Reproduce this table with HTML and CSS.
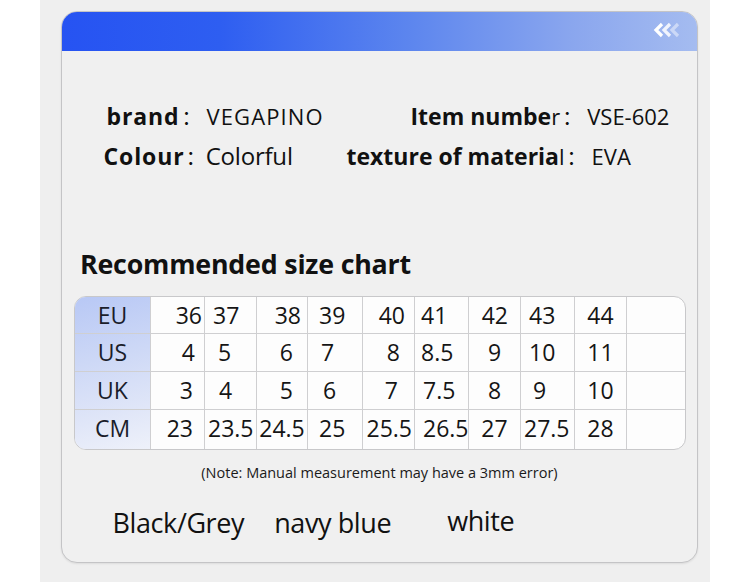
FILE: index.html
```html
<!DOCTYPE html>
<html>
<head>
<meta charset="utf-8">
<link rel="stylesheet" href="styles.css">
</head>
<body>
<div class="page">
  <div class="card">
    <div class="bar">
      <svg class="chev" width="30" height="16" viewBox="0 0 30 16">
        <path d="M9 2 L3 8 L9 14" fill="none" stroke="#ffffff" stroke-width="3.2"/>
        <path d="M17 2 L11 8 L17 14" fill="none" stroke="#ffffff" stroke-opacity="0.85" stroke-width="3.2"/>
        <path d="M25 2 L19 8 L25 14" fill="none" stroke="#ffffff" stroke-opacity="0.45" stroke-width="3.2"/>
      </svg>
    </div>

    <div class="info">
      <div class="info-row">
        <div class="item w1"><b class="wide">brand</b><span class="colon">：</span><span class="v vega">VEGAPINO</span></div>
        <div class="item"><b>Item numbe</b>r<span class="colon">：</span><span class="v">VSE-602</span></div>
      </div>
      <div class="info-row">
        <div class="item w2"><b class="wide">Colour</b><span class="colon tight">：</span><span class="v big">Colorful</span></div>
        <div class="item"><b>texture of materia</b>l<span class="colon">：</span><span class="v">EVA</span></div>
      </div>
    </div>

    <h2 class="title">Recommended size chart</h2>

    <div class="chart">
      <div class="heads">
        <div class="hd">EU</div>
        <div class="hd">US</div>
        <div class="hd">UK</div>
        <div class="hd last">CM</div>
      </div>
      <div class="grid">
        <div class="c r2">36</div><div class="c l8">37</div><div class="c r6">38</div><div class="c l11">39</div><div class="c r9">40</div><div class="c l6">41</div><div class="c r12">42</div><div class="c l8">43</div><div class="c m">44</div><div class="c e"></div>

        <div class="c r9">4</div><div class="c l13">5</div><div class="c r14">6</div><div class="c l13">7</div><div class="c r14">8</div><div class="c l6">8.5</div><div class="c m">9</div><div class="c l8">10</div><div class="c m">11</div><div class="c e"></div>

        <div class="c r11">3</div><div class="c l14">4</div><div class="c r14">5</div><div class="c l15">6</div><div class="c r16">7</div><div class="c l8">7.5</div><div class="c m">8</div><div class="c l12">9</div><div class="c m">10</div><div class="c e"></div>

        <div class="c last r11">23</div><div class="c last l3">23.5</div><div class="c last m">24.5</div><div class="c last l11">25</div><div class="c last r2">25.5</div><div class="c last l8">26.5</div><div class="c last m">27</div><div class="c last l3">27.5</div><div class="c last m">28</div><div class="c last e"></div>
      </div>
    </div>

    <p class="note">(Note: Manual measurement may have a 3mm error)</p>

    <div class="colors">
      <span class="col k1">Black/Grey</span>
      <span class="col k2">navy blue</span>
      <span class="col k3">white</span>
    </div>
  </div>
</div>
</body>
</html>
```

FILE: styles.css
```css
* { box-sizing: border-box; }
html, body { margin: 0; padding: 0; background: #ffffff; }
body {
  font-family: "Open Sans", "Noto Sans", "Noto Sans CJK SC", sans-serif;
  color: #111;
}
.page {
  margin-left: 40px;
  width: 670px;
  height: 582px;
  background: #efefef;
  padding: 11px 12px 0 21px;
}
.card {
  width: 637px;
  height: 552px;
  border: 1.5px solid #c4c4c6;
  border-radius: 16px;
  background: #f0f0f0;
  overflow: hidden;
  box-shadow: 0 1px 2px rgba(0,0,0,0.08);
}
.bar {
  height: 40px;
  background: linear-gradient(90deg, #2653f2 0%, #2e5ef1 25%, #5d86ee 55%, #8aa6ee 80%, #a5bcf0 100%);
  display: flex;
  justify-content: flex-end;
  align-items: center;
  padding-right: 16px;
  margin: -1.5px -1.5px 0 -1.5px;
}
.chev { display: block; margin-top: -2px; }

.info { padding-top: 49px; height: 195px; }
.info-row { display: flex; align-items: baseline; height: 39px; }
.item { font-size: 22px; white-space: nowrap; }
.item b { font-weight: 700; font-size: 23px; }
.item b.wide { letter-spacing: 0.9px; }
.colon { font-family: "Noto Sans CJK SC", sans-serif; font-size: 20px; margin: 0 5px 0 2px; }
.colon.tight { margin: 0 0 0 1px; }
.v { font-size: 22px; }
.v.vega { letter-spacing: 1.1px; }
.v.big { font-size: 24px; letter-spacing: -0.2px; }
.w1 { margin-left: 44.5px; width: 304px; }
.w2 { margin-left: 41.5px; width: 243px; }

.title {
  margin: 0 0 14px 18px;
  font-size: 26.8px;
  font-weight: 700;
  line-height: 36px;
  letter-spacing: -0.2px;
}

.chart {
  margin-left: 12px;
  width: 612px;
  display: flex;
  border: 1.5px solid #c8c8ca;
  border-radius: 12px;
  overflow: hidden;
  background: #fdfdfd;
}
.heads {
  width: 76px;
  flex: none;
  display: grid;
  grid-template-rows: 37px 38px 38px 39px;
  background: linear-gradient(165deg, #b8c8f5 0%, #cdd8f6 40%, #e0e6f8 75%, #eef1fa 100%);
}
.grid {
  flex: 1;
  display: grid;
  grid-template-columns: 54px 52px 51px 55px 52px 54px 52px 54px 52px 1fr;
  grid-template-rows: 37px 38px 38px 39px;
}
.hd, .c {
  font-size: 23px;
  line-height: 36px;
  border-right: 1px solid #cfcfd1;
  border-bottom: 1px solid #cfcfd1;
  white-space: nowrap;
  color: #151515;
}
.hd { text-align: center; color: #1a1d2a; }
.last { border-bottom: none; }
.e { border-right: none; }
.m { text-align: center; }
.r2 { text-align: right; padding-right: 2px; }
.r6 { text-align: right; padding-right: 6px; }
.r9 { text-align: right; padding-right: 9px; }
.r11 { text-align: right; padding-right: 11px; }
.r12 { text-align: right; padding-right: 12px; }
.r14 { text-align: right; padding-right: 14px; }
.r16 { text-align: right; padding-right: 16px; }
.l3 { padding-left: 3px; }
.l6 { padding-left: 6px; }
.l8 { padding-left: 8px; }
.l11 { padding-left: 11px; }
.l12 { padding-left: 12px; }
.l13 { padding-left: 13px; }
.l14 { padding-left: 14px; }
.l15 { padding-left: 15px; }

.note {
  margin: 11px 0 0 0;
  text-align: center;
  font-size: 14.5px;
  line-height: 24px;
  color: #1a1a1a;
}
.colors { display: flex; align-items: baseline; margin-top: 19px; }
.col { font-size: 27px; letter-spacing: -0.4px; color: #111; }
.k1 { margin-left: 50.5px; }
.k2 { margin-left: 30px; }
.k3 { margin-left: 56px; position: relative; top: -2px; }
```
